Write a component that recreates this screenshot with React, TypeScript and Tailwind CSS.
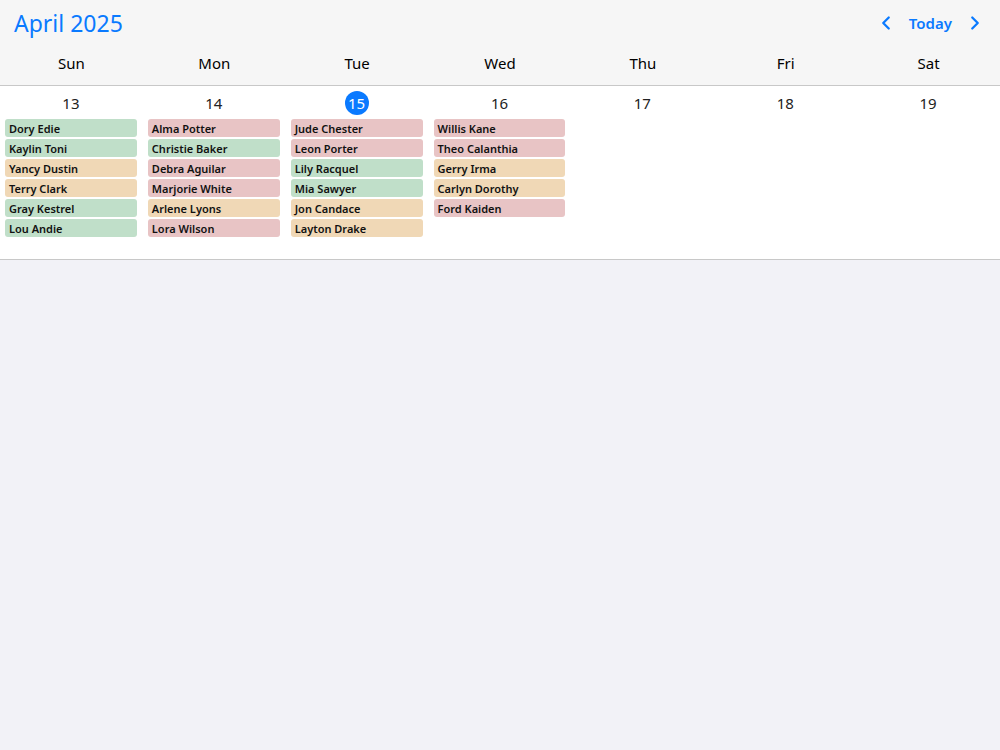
import { ChevronLeft, ChevronRight } from "lucide-react";

type Tone = "green" | "pink" | "orange";

const toneClass: Record<Tone, string> = {
  green: "bg-[#c0dfc9]",
  pink: "bg-[#e8c4c5]",
  orange: "bg-[#f0d8b6]",
};

const days = [
  {
    name: "Sun",
    date: 13,
    events: [
      ["Dory Edie", "green"],
      ["Kaylin Toni", "green"],
      ["Yancy Dustin", "orange"],
      ["Terry Clark", "orange"],
      ["Gray Kestrel", "green"],
      ["Lou Andie", "green"],
    ],
  },
  {
    name: "Mon",
    date: 14,
    events: [
      ["Alma Potter", "pink"],
      ["Christie Baker", "green"],
      ["Debra Aguilar", "pink"],
      ["Marjorie White", "pink"],
      ["Arlene Lyons", "orange"],
      ["Lora Wilson", "pink"],
    ],
  },
  {
    name: "Tue",
    date: 15,
    today: true,
    events: [
      ["Jude Chester", "pink"],
      ["Leon Porter", "pink"],
      ["Lily Racquel", "green"],
      ["Mia Sawyer", "green"],
      ["Jon Candace", "orange"],
      ["Layton Drake", "orange"],
    ],
  },
  {
    name: "Wed",
    date: 16,
    events: [
      ["Willis Kane", "pink"],
      ["Theo Calanthia", "pink"],
      ["Gerry Irma", "orange"],
      ["Carlyn Dorothy", "orange"],
      ["Ford Kaiden", "pink"],
    ],
  },
  { name: "Thu", date: 17, events: [] },
  { name: "Fri", date: 18, events: [] },
  { name: "Sat", date: 19, events: [] },
] as { name: string; date: number; today?: boolean; events: [string, Tone][] }[];

export default function App() {
  return (
    <div className="flex h-[750px] w-[1000px] flex-col bg-[#f2f2f7] font-['Segoe_UI','Noto_Sans',sans-serif] text-black">
      <div className="border-b border-[#c8c8c8] bg-[#f6f6f6]">
        <div className="flex h-[46px] items-center justify-between pl-[14px] pr-[14px]">
          <h1 className="text-[23px] leading-none text-[#0a7aff]">April 2025</h1>
          <div className="flex items-center text-[#0a7aff]">
            <ChevronLeft className="h-[22px] w-[22px]" strokeWidth={2.5} />
            <span className="px-[12px] text-[15px] font-semibold">Today</span>
            <ChevronRight className="h-[22px] w-[22px]" strokeWidth={2.5} />
          </div>
        </div>
        <div className="grid h-[39px] grid-cols-7 items-center pb-[4px]">
          {days.map((d) => (
            <div key={d.name} className="text-center text-[15px] leading-none">
              {d.name}
            </div>
          ))}
        </div>
      </div>
      <div className="grid h-[174px] grid-cols-7 border-b border-[#c8c8c8] bg-white">
        {days.map((d) => (
          <div key={d.date} className="flex flex-col pl-[5px] pr-[6px] pt-[5px]">
            <div className="flex h-[24px] items-center justify-center">
              {d.today ? (
                <span className="flex h-[24px] w-[24px] items-center justify-center rounded-full bg-[#0a7aff] text-[15px] text-white">
                  {d.date}
                </span>
              ) : (
                <span className="text-[15px] text-[#222]">{d.date}</span>
              )}
            </div>
            <div className="mt-[4px] flex flex-col gap-[2px]">
              {d.events.map(([n, t]) => (
                <div
                  key={n}
                  className={`h-[18px] rounded-[3px] px-[4px] pt-[1px] text-[11px] font-semibold leading-[18px] text-[#111] ${toneClass[t]}`}
                >
                  {n}
                </div>
              ))}
            </div>
          </div>
        ))}
      </div>
      <div className="flex-1" />
    </div>
  );
}
